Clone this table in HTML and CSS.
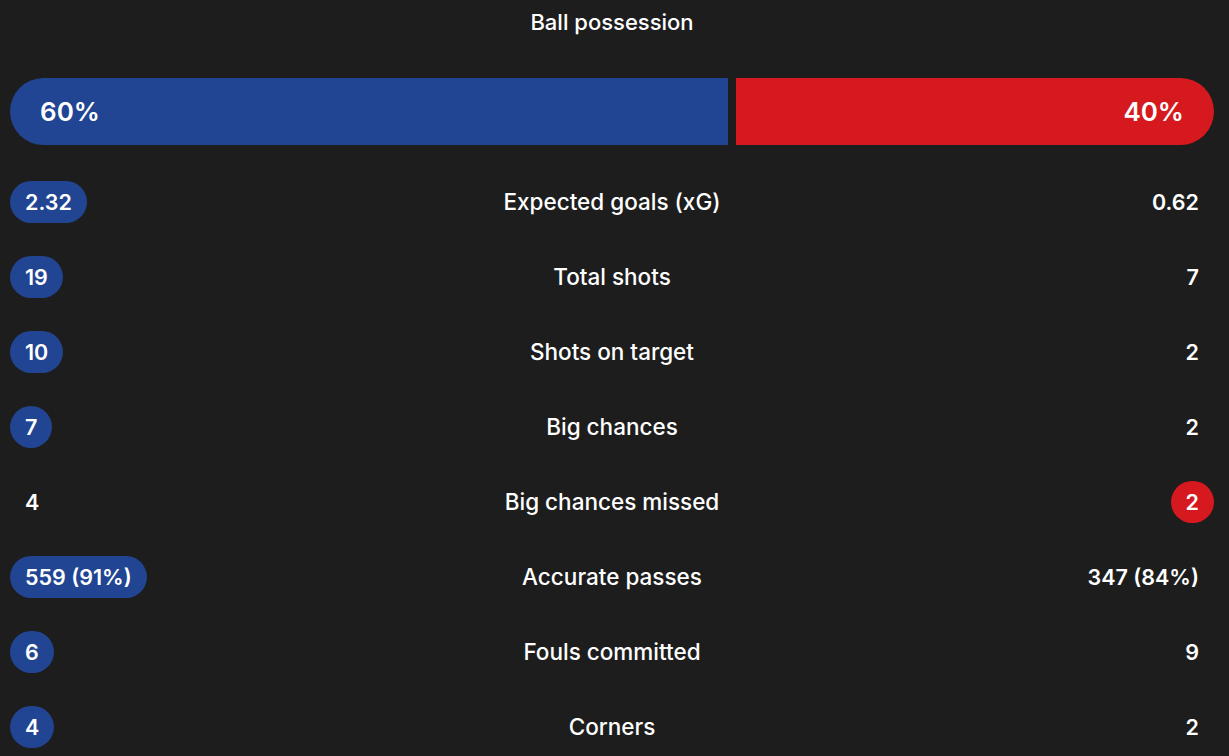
FILE: index.html
```html
<!DOCTYPE html>
<html>
<head>
<meta charset="utf-8">
<link rel="stylesheet" href="styles.css">
</head>
<body>
<div class="stats">
  <div class="title">Ball possession</div>
  <div class="possession" style="grid-template-columns: 60fr 40fr">
    <div class="pos home">60%</div>
    <div class="pos away">40%</div>
  </div>
  <div class="rows">
    <div class="row"><div class="val left"><span class="pill blue">2.32</span></div><div class="label">Expected goals (xG)</div><div class="val right"><span class="pill">0.62</span></div></div>
    <div class="row"><div class="val left"><span class="pill blue">19</span></div><div class="label">Total shots</div><div class="val right"><span class="pill">7</span></div></div>
    <div class="row"><div class="val left"><span class="pill blue">10</span></div><div class="label">Shots on target</div><div class="val right"><span class="pill">2</span></div></div>
    <div class="row"><div class="val left"><span class="pill blue">7</span></div><div class="label">Big chances</div><div class="val right"><span class="pill">2</span></div></div>
    <div class="row"><div class="val left"><span class="pill">4</span></div><div class="label">Big chances missed</div><div class="val right"><span class="pill red">2</span></div></div>
    <div class="row"><div class="val left"><span class="pill blue">559 (91%)</span></div><div class="label">Accurate passes</div><div class="val right"><span class="pill">347 (84%)</span></div></div>
    <div class="row"><div class="val left"><span class="pill blue">6</span></div><div class="label">Fouls committed</div><div class="val right"><span class="pill">9</span></div></div>
    <div class="row"><div class="val left"><span class="pill blue">4</span></div><div class="label">Corners</div><div class="val right"><span class="pill">2</span></div></div>
  </div>
</div>
</body>
</html>
```
FILE: styles.css
```css
html, body {
  margin: 0;
  padding: 0;
  background: #1d1d1d;
  color: #ffffff;
  font-family: Inter, "Noto Sans", sans-serif;
}
.stats {
  padding: 0 15px 0 10px;
}
.title {
  text-align: center;
  font-size: 22px;
  line-height: 45px;
  font-weight: 500;
}
.possession {
  display: grid;
  column-gap: 8px;
  margin-top: 33px;
  height: 67px;
}
.pos {
  display: flex;
  align-items: center;
  font-size: 26px;
  font-weight: 600;
}
.home {
  background: #214592;
  border-radius: 34px 0 0 34px;
  padding-left: 30px;
}
.away {
  background: #d6191f;
  border-radius: 0 34px 34px 0;
  justify-content: flex-end;
  padding-right: 30px;
}
.rows {
  margin-top: 19px;
  display: flex;
  flex-direction: column;
}
.row {
  display: grid;
  grid-template-columns: 1fr auto 1fr;
  align-items: center;
  height: 75px;
}
.val {
  display: flex;
}
.val.right {
  justify-content: flex-end;
}
.label {
  text-align: center;
  font-size: 22.5px;
  font-weight: 500;
}
.pill {
  display: inline-flex;
  align-items: center;
  justify-content: center;
  height: 42px;
  min-width: 42px;
  box-sizing: border-box;
  padding: 0 15px;
  border-radius: 21px;
  font-size: 21.5px;
  font-weight: 600;
}
.pill.blue {
  background: #214592;
}
.pill.red {
  background: #d6191f;
}
```
